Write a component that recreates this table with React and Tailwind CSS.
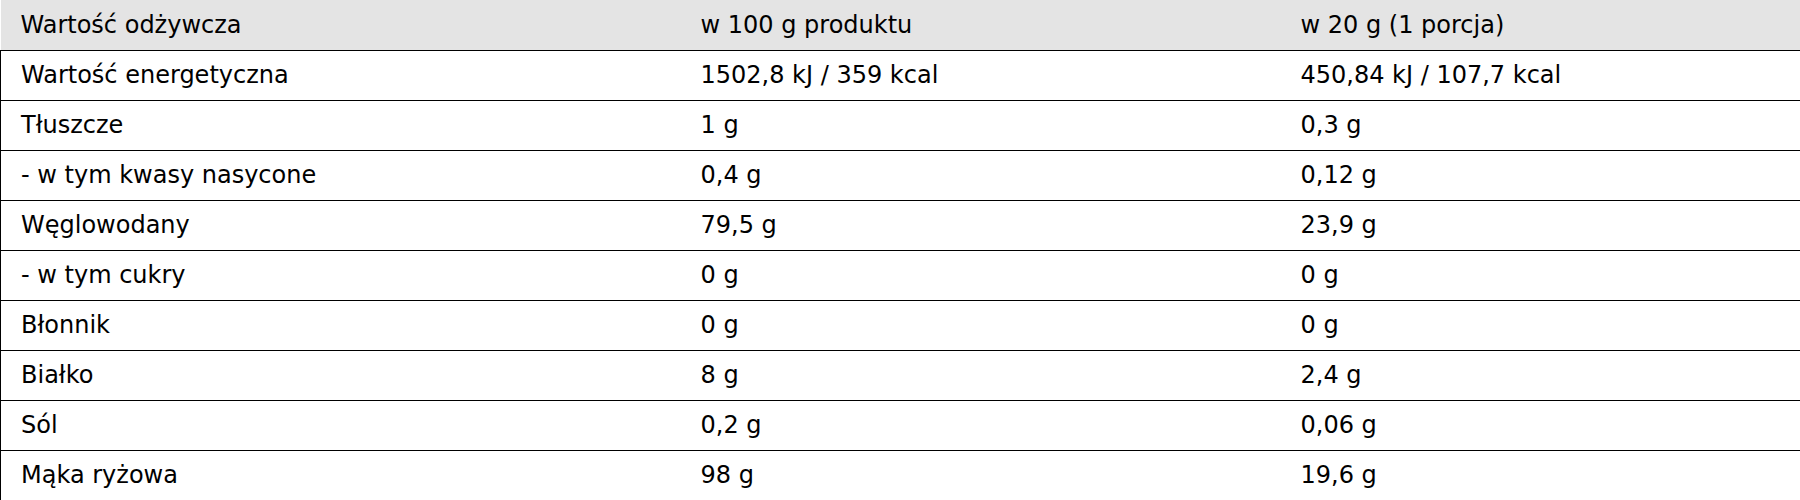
const rows = [
  ['Wartość energetyczna', '1502,8 kJ / 359 kcal', '450,84 kJ / 107,7 kcal'],
  ['Tłuszcze', '1 g', '0,3 g'],
  ['- w tym kwasy nasycone', '0,4 g', '0,12 g'],
  ['Węglowodany', '79,5 g', '23,9 g'],
  ['- w tym cukry', '0 g', '0 g'],
  ['Błonnik', '0 g', '0 g'],
  ['Białko', '8 g', '2,4 g'],
  ['Sól', '0,2 g', '0,06 g'],
  ['Mąka ryżowa', '98 g', '19,6 g'],
];

export default function App() {
  return (
    <div className="bg-white text-black font-['DejaVu_Sans',sans-serif] text-[24px] leading-none">
      <table className="w-full border-collapse text-left">
        <thead>
          <tr className="h-[50px] bg-[#e4e4e4] border-b border-black">
            <th className="w-[680px] px-5 font-normal">Wartość odżywcza</th>
            <th className="w-[600px] px-5 font-normal">w 100 g produktu</th>
            <th className="px-5 font-normal">w 20 g (1 porcja)</th>
          </tr>
        </thead>
        <tbody>
          {rows.map(([name, per100, perPortion]) => (
            <tr key={name} className="h-[50px] border-b border-black">
              <td className="px-5 border-l border-black">{name}</td>
              <td className="px-5">{per100}</td>
              <td className="px-5">{perPortion}</td>
            </tr>
          ))}
        </tbody>
      </table>
    </div>
  );
}
